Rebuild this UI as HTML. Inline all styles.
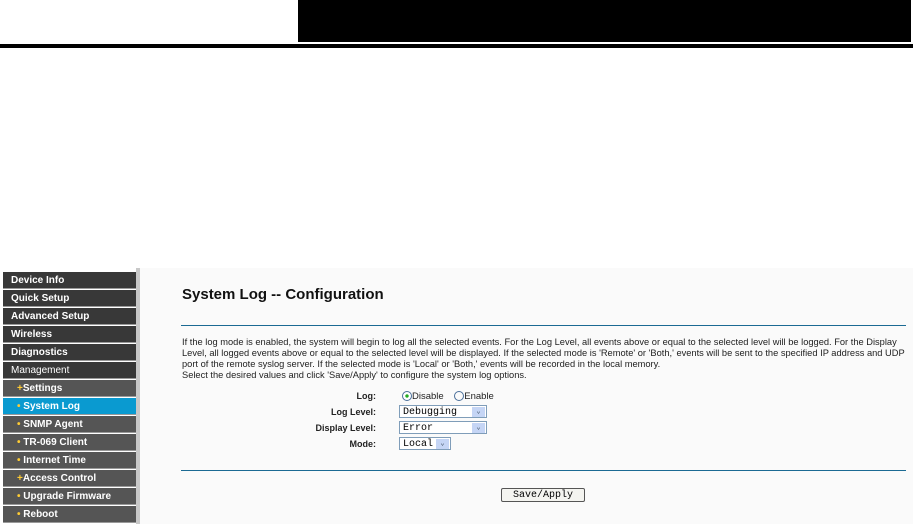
<!DOCTYPE html><html><head><style>
body{margin:0;width:913px;height:524px;background:#fff;position:relative;overflow:hidden;font-family:"Liberation Sans",sans-serif}
.a{position:absolute}
.nav div{position:absolute;left:3px;width:133px;height:17px;color:#fff;font-weight:bold;font-size:10px;line-height:17px;padding-left:8px;box-sizing:border-box;border-bottom:1px solid #999}
.d{background:#383838}.s{background:#555;padding-left:14px!important}
.p{font-size:9.3px;color:#222;line-height:11px;white-space:nowrap}
.lab{font-size:9px;font-weight:bold;color:#222;text-align:right;width:120px;left:256px}
.sel{border:1px solid #7f9db9;background:#fff;height:13px;font-family:"Liberation Mono",monospace;font-size:10px;line-height:13px;padding-left:3px;box-sizing:border-box}
.sel b{position:absolute;right:1px;top:1px;width:13px;height:10px;background:#c5d5f5;font-size:7px;color:#345;text-align:center;line-height:10px;font-weight:normal}
</style></head><body>
<div class="a" style="left:298px;top:0;width:613px;height:42px;background:#000"></div>
<div class="a" style="left:0;top:44px;width:913px;height:4px;background:#000"></div>
<div class="a" style="left:137px;top:268px;width:776px;height:256px;background:#fafafa"></div>
<div class="a" style="left:136px;top:268px;width:4px;height:256px;background:#c8c8c8"></div>
<div class="nav">
<div class="d" style="top:272px">Device Info</div>
<div class="d" style="top:290px">Quick Setup</div>
<div class="d" style="top:308px">Advanced Setup</div>
<div class="d" style="top:326px">Wireless</div>
<div class="d" style="top:344px">Diagnostics</div>
<div class="d" style="top:362px;font-weight:normal">Management</div>
<div class="s" style="top:380px"><span style="color:#fc3">+</span>Settings</div>
<div class="s" style="top:398px;background:#0a9ad0"><span style="color:#fc3">•</span> System Log</div>
<div class="s" style="top:416px"><span style="color:#fc3">•</span> SNMP Agent</div>
<div class="s" style="top:434px"><span style="color:#fc3">•</span> TR-069 Client</div>
<div class="s" style="top:452px"><span style="color:#fc3">•</span> Internet Time</div>
<div class="s" style="top:470px"><span style="color:#fc3">+</span>Access Control</div>
<div class="s" style="top:488px"><span style="color:#fc3">•</span> Upgrade Firmware</div>
<div class="s" style="top:506px"><span style="color:#fc3">•</span> Reboot</div>
</div>
<div class="a" style="left:182px;top:286px;font-size:15px;font-weight:bold;color:#111">System Log -- Configuration</div>
<div class="a" style="left:181px;top:325px;width:725px;height:1px;background:#1b6a93"></div>
<div class="a p" style="left:182px;top:337px">If the log mode is enabled, the system will begin to log all the selected events. For the Log Level, all events above or equal to the selected level will be logged. For the Display<br>Level, all logged events above or equal to the selected level will be displayed. If the selected mode is 'Remote' or 'Both,' events will be sent to the specified IP address and UDP<br>port of the remote syslog server. If the selected mode is 'Local' or 'Both,' events will be recorded in the local memory.<br>Select the desired values and click 'Save/Apply' to configure the system log options.</div>
<div class="a lab" style="top:391px">Log:</div>
<div class="a lab" style="top:407px">Log Level:</div>
<div class="a lab" style="top:423px">Display Level:</div>
<div class="a lab" style="top:439px">Mode:</div>
<div class="a p" style="left:402px;top:391px;font-size:9.5px"><span style="display:inline-block;width:8px;height:8px;border:1px solid #4a6f9a;border-radius:50%;vertical-align:-2px;background:radial-gradient(#2a2 25%,#fff 35%)"></span>Disable&nbsp;&nbsp;&nbsp;&nbsp;<span style="display:inline-block;width:8px;height:8px;border:1px solid #4a6f9a;border-radius:50%;vertical-align:-2px"></span>Enable</div>
<div class="a sel" style="left:399px;top:405px;width:88px">Debugging<b>⌄</b></div>
<div class="a sel" style="left:399px;top:421px;width:88px">Error<b>⌄</b></div>
<div class="a sel" style="left:399px;top:437px;width:52px">Local<b>⌄</b></div>
<div class="a" style="left:181px;top:470px;width:725px;height:1px;background:#1b6a93"></div>
<div class="a" style="left:501px;top:488px;width:84px;height:14px;border:1px solid #555;border-radius:2px;background:#f4f4f0;font-family:'Liberation Mono',monospace;font-size:10px;text-align:center;line-height:14px;box-sizing:border-box">Save/Apply</div>
</body></html>
